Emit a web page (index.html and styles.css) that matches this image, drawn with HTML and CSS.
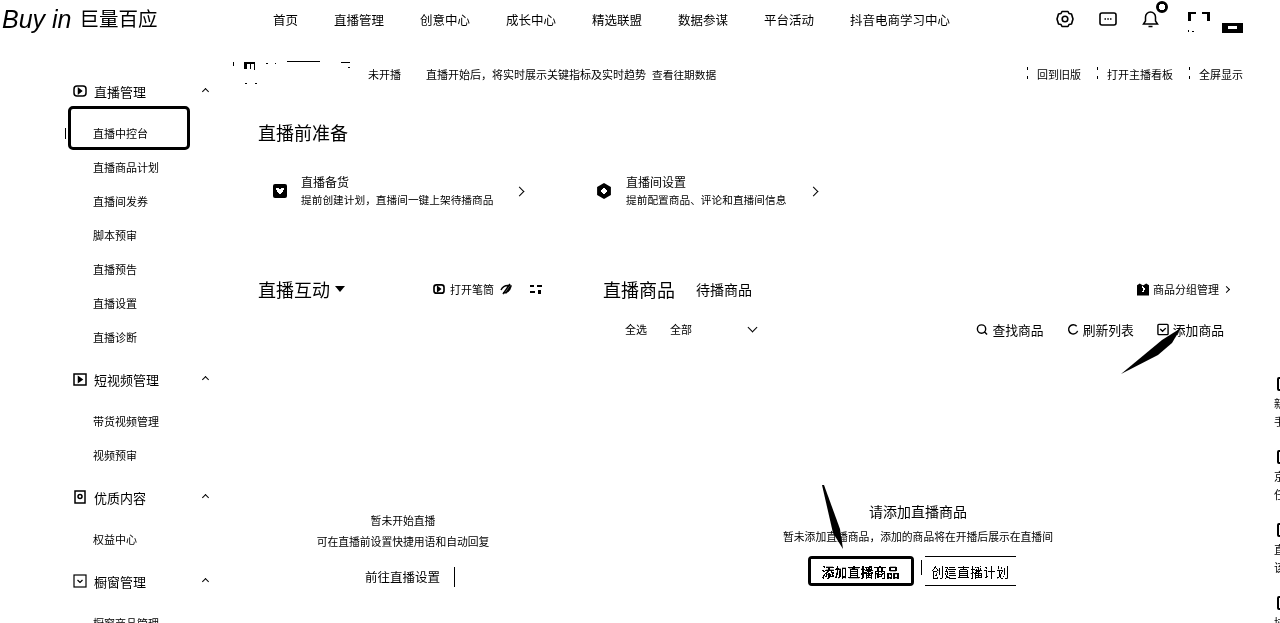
FILE: index.html
```html
<!DOCTYPE html>
<html lang="zh-CN">
<head>
    <meta charset="UTF-8">
    <title>巨量百应</title>
    <link rel="stylesheet" href="styles.css">
</head>
<body>
    <header class="topbar">
        <div class="logo"><span class="logo-en">Buy in</span><span class="logo-cn">巨量百应</span></div>
        <nav class="nav">
            <a>首页</a><a>直播管理</a><a>创意中心</a><a>成长中心</a><a>精选联盟</a><a>数据参谋</a><a>平台活动</a><a>抖音电商学习中心</a>
        </nav>
        <div class="top-icons">
            <svg width="18" height="18" viewBox="0 0 18 18" fill="none" stroke="#000" stroke-width="1.600" stroke-linejoin="round"><path d="M6 1.500h6l1 2 2.500.5 1.500 5-1.500 5-2.500.5-1 2H6l-1-2-2.500-.5L1 9l1.500-5L5 3.500z"/><circle cx="9" cy="9" r="2.800"/></svg>
            <svg width="18" height="15" viewBox="0 0 18 15" fill="none" stroke="#000" stroke-width="1.600"><path d="M3 1h12a2 2 0 0 1 2 2v8a2 2 0 0 1-2 2H3a2 2 0 0 1-2-2V3a2 2 0 0 1 2-2z"/><path d="M5.500 7h1.500M8.300 7h1.500M11 7h1.500"/></svg>
            <span class="bell">
                <svg width="17" height="18" viewBox="0 0 17 18" fill="none" stroke="#000" stroke-width="1.500"><path d="M3.500 11V7a5 5 0 0 1 10 0v4l2 3H1.500zM6.500 16.500h4"/></svg>
                <i class="badge"></i>
            </span>
            <svg class="fullscreen" width="22" height="20" viewBox="0 0 22 20"><path d="M0 0h8v2H3v7H0zM14 0h8v9h-3V2h-5z"/><rect x="0" y="18" width="1" height="2"/><rect x="4" y="19" width="2" height="1"/></svg>
            <span class="avatar"><i></i></span>
        </div>
    </header>

    <div class="layout">
        <aside class="sidebar">
            <section class="menu-group">
                <h4><svg width="14" height="12" viewBox="0 0 14 12" fill="none" stroke="#000" stroke-width="1.500"><rect x="1" y="1" width="12" height="10" rx="3"/><path d="M5.500 3.500v5l3-2.500z" fill="#000"/></svg>直播管理<span class="caret"></span></h4>
                <a class="active">直播中控台</a>
                <a>直播商品计划</a>
                <a>直播间发券</a>
                <a>脚本预审</a>
                <a>直播预告</a>
                <a>直播设置</a>
                <a>直播诊断</a>
            </section>
            <section class="menu-group">
                <h4><svg width="14" height="13" viewBox="0 0 14 13" fill="none" stroke="#000" stroke-width="1.500"><rect x="1" y="1" width="12" height="11"/><path d="M5.500 4v5l3.500-2.500z" fill="#000"/></svg>短视频管理<span class="caret"></span></h4>
                <a>带货视频管理</a>
                <a>视频预审</a>
            </section>
            <section class="menu-group">
                <h4><svg width="14" height="14" viewBox="0 0 14 14" fill="none" stroke="#000" stroke-width="1.500"><rect x="2" y="1" width="10" height="12"/><circle cx="7" cy="6.500" r="2"/></svg>优质内容<span class="caret"></span></h4>
                <a>权益中心</a>
            </section>
            <section class="menu-group">
                <h4><svg width="14" height="14" viewBox="0 0 14 14" fill="none" stroke="#000" stroke-width="1.200"><rect x="1" y="1" width="12" height="12"/><path d="M4.500 6l2.500 2.500L9.500 6"/></svg>橱窗管理<span class="caret"></span></h4>
                <a>橱窗商品管理</a>
            </section>
        </aside>

        <main class="main">
            <div class="status-bar">
                <div class="room-name">
                    <svg width="122" height="26" viewBox="0 0 122 26"><rect x="3" y="1" width="1" height="4"/><path d="M14 1h11v8h-1V3h-3v5h-1V3h-3v5h-3z"/><rect x="36" y="2" width="2" height="1"/><rect x="45" y="2" width="1" height="1"/><rect x="57" y="0" width="33" height="1"/><path d="M111 1h9v1h-9zM118 6h2v1h-2z"/><rect x="15" y="22" width="2" height="1"/><rect x="25" y="22" width="2" height="1"/></svg>
                </div>
                <span class="status-live">未开播</span>
                <span class="status-tip">直播开始后，将实时展示关键指标及实时趋势</span>
                <a class="status-history">查看往期数据</a>
                <div class="status-links"><a>回到旧版</a><a>打开主播看板</a><a>全屏显示</a></div>
            </div>

            <h2 class="section-head">直播前准备</h2>
            <div class="prep-row">
                <div class="prep-card">
                    <svg width="16" height="16" viewBox="0 0 16 16"><rect x="1" y="1" width="14" height="14" rx="2"/><path d="M4 5.500l2 -1 2 1.500 2-1.500 2 1-1 3-3 3-3-3z" fill="#fff"/></svg>
                    <div class="prep-text"><b>直播备货</b><small>提前创建计划，直播间一键上架待播商品</small></div>
                    <span class="chev"></span>
                </div>
                <div class="prep-card">
                    <svg width="16" height="16" viewBox="0 0 16 16"><path d="M8 0l6.900 4v8L8 16l-6.900-4V4z"/><circle cx="8" cy="8" r="2.800" fill="#fff"/></svg>
                    <div class="prep-text"><b>直播间设置</b><small>提前配置商品、评论和直播间信息</small></div>
                    <span class="chev"></span>
                </div>
            </div>

            <div class="panels">
                <section class="panel-left">
                    <div class="panel-head">
                        <h2>直播互动<i class="tri"></i></h2>
                        <div class="panel-tools">
                            <svg width="12" height="10" viewBox="0 0 14 12" fill="none" stroke="#000" stroke-width="2"><rect x="1" y="1" width="12" height="10" rx="3"/><path d="M5.500 3.500v5l3-2.500z" fill="#000"/></svg>
                            <span>打开笔筒</span>
                            <svg class="tool-eye" width="12" height="12" viewBox="0 0 12 12" fill="none" stroke="#000" stroke-width="1.500"><path d="M1 7c2-4 6-5 10-4-1 4-4 7-8 7M3 11l7-10M6 10l4-6"/></svg>
                            <svg class="tool-grid" width="12" height="11" viewBox="0 0 12 11"><rect x="0" y="1" width="4" height="2"/><rect x="7" y="1" width="5" height="2"/><rect x="0" y="7" width="5" height="2"/><rect x="8" y="6" width="3" height="4"/></svg>
                        </div>
                    </div>
                    <div class="empty-left">
                        <p>暂未开始直播</p>
                        <p>可在直播前设置快捷用语和自动回复</p>
                        <a class="link-btn">前往直播设置</a>
                    </div>
                </section>

                <section class="panel-right">
                    <div class="panel-head">
                        <h2>直播商品</h2><span class="tab">待播商品</span>
                        <a class="group-link"><svg width="12" height="13" viewBox="0 0 13 13"><path d="M0 2l3-2 3 2h1l3-2 3 2v11H0z"/><path d="M6 3l2 3-2 3" fill="none" stroke="#fff" stroke-width="1.500"/></svg>商品分组管理<i class="chev-small"></i></a>
                    </div>
                    <div class="filter-row">
                        <span class="check-all">全选</span>
                        <span class="select">全部<i class="chev-down"></i></span>
                        <div class="actions">
                            <a><svg width="12" height="13" viewBox="0 0 13 13" fill="none" stroke="#000" stroke-width="1.500"><circle cx="6" cy="6" r="4.500"/><path d="M9 9l3 3"/></svg>查找商品</a>
                            <a><svg width="12" height="13" viewBox="0 0 13 13" fill="none" stroke="#000" stroke-width="1.500"><path d="M10.500 3A5 5 0 1 0 11.500 8"/></svg>刷新列表</a>
                            <a><svg width="12" height="13" viewBox="0 0 13 13" fill="none" stroke="#000" stroke-width="1.500"><rect x="1" y="1" width="11" height="11" rx="1"/><path d="M3.500 6l2.500 2.500L9.500 5"/></svg>添加商品</a>
                        </div>
                    </div>
                    <div class="empty-right">
                        <h3>请添加直播商品</h3>
                        <p>暂未添加直播商品，添加的商品将在开播后展示在直播间</p>
                        <div class="btn-row">
                            <button class="btn-primary">添加直播商品</button>
                            <button class="btn-plain">创建直播计划</button>
                        </div>
                    </div>
                </section>
            </div>
        </main>
    </div>

    <aside class="side-float">
        <i></i><span>新<br>手</span>
        <i></i><span>京<br>任</span>
        <i></i><span>直<br>该</span>
        <i></i><span>协</span>
    </aside>

    <svg class="arrow arrow-add" width="65" height="50" viewBox="0 0 65 50"><path d="M1 49L42 15 61 3 52 18 38 30z"/></svg>
    <svg class="arrow arrow-btn" width="24" height="66" viewBox="0 0 24 66"><path d="M0 0L2 0 18 44 21 64 11 48z"/></svg>
</body>
</html>
```

FILE: styles.css
```css
* {
    box-sizing: border-box;
}

html, body {
    height: 623px;
    overflow: hidden;
}

body {
    margin: 0;
    background: #fff;
    color: #000;
    font-family: "Noto Sans CJK SC", "Liberation Sans", sans-serif;
    filter: grayscale(1) contrast(20);
    position: relative;
}

.topbar {
    display: flex;
    align-items: center;
    height: 38px;
}

.logo {
    width: 273px;
    padding-left: 2px;
    display: flex;
    align-items: center;
    gap: 8px;
}

.logo-en {
    font-family: "Liberation Sans", sans-serif;
    font-size: 25px;
    font-style: italic;
}

.logo-cn {
    font-size: 19.500px;
    line-height: 1;
    margin-top: -2px;
}

.nav {
    display: flex;
    gap: 36px;
    font-size: 12.500px;
}

.top-icons {
    margin-left: auto;
    width: 224px;
    display: flex;
    align-items: center;
    gap: 25px;
}

.bell {
    position: relative;
    display: flex;
}

.badge {
    position: absolute;
    top: -9px;
    right: -9px;
    width: 12px;
    height: 12px;
    border: 3px solid #000;
    border-radius: 50%;
    background: #fff;
}

.fullscreen {
    margin: 0 0 -6px 4px;
}

.avatar {
    position: relative;
    width: 21px;
    height: 10px;
    margin: 18px 0 0 -13px;
    background: #000;
}

.avatar i {
    position: absolute;
    left: 6px;
    top: 3px;
    width: 9px;
    height: 3px;
    background: #fff;
}

.layout {
    display: flex;
}

.sidebar {
    width: 230px;
    padding-top: 42px;
    flex-shrink: 0;
}

.menu-group {
    margin-bottom: 14px;
}

.menu-group h4 {
    position: relative;
    display: flex;
    align-items: center;
    gap: 7px;
    height: 24px;
    margin: 0 0 12px;
    padding: 0 0 2px 73px;
    font-size: 13px;
    font-weight: 400;
}

.caret {
    position: absolute;
    left: 203px;
    top: 9px;
    width: 5px;
    height: 5px;
    border-left: 1.500px solid #000;
    border-top: 1.500px solid #000;
    transform: rotate(45deg);
}

.menu-group a {
    display: flex;
    align-items: center;
    height: 34px;
    padding-left: 93px;
    font-size: 11px;
}

.menu-group a.active {
    position: relative;
    height: 44px;
    margin: -10px 40px 0 68px;
    padding: 10px 0 0 22px;
    border: 3px solid #000;
    border-radius: 5px;
}

.menu-group a.active::before {
    content: "";
    position: absolute;
    left: -6px;
    top: 19px;
    width: 1px;
    height: 11px;
    background: #000;
}

.main {
    flex: 1;
    min-width: 0;
    padding-right: 50px;
}

.status-bar {
    display: flex;
    align-items: center;
    height: 24px;
    margin-top: 24px;
    font-size: 11px;
}

.room-name {
    width: 138px;
    height: 20px;
    flex-shrink: 0;
}

.room-name svg {
    display: block;
    margin-top: -3px;
}

.status-tip {
    margin: 0 6px 0 25px;
}

.status-history {
    font-size: 10.700px;
}

.status-links {
    margin: 0 -13px 0 auto;
    display: flex;
    gap: 26px;
}

.status-links a {
    position: relative;
}

.status-links a::before {
    content: "";
    position: absolute;
    left: -10px;
    top: 1px;
    width: 1px;
    height: 3px;
    background: #000;
    box-shadow: 0 9px 0 #000;
}

.section-head {
    margin: 32px 0 0 28px;
    font-size: 18px;
    font-weight: 400;
    line-height: 28px;
}

.prep-row {
    display: flex;
    margin: 27px 0 0 42px;
}

.prep-card {
    display: flex;
    align-items: center;
    width: 324px;
}

.prep-text {
    display: flex;
    flex-direction: column;
    width: 215px;
    margin-left: 13px;
}

.prep-card + .prep-card .prep-text {
    width: 184px;
    margin-left: 14px;
}

.prep-text b {
    font-size: 12px;
    font-weight: 400;
    line-height: 18px;
}

.prep-text small {
    font-size: 10.700px;
    line-height: 18px;
    white-space: nowrap;
}

.chev {
    width: 7px;
    height: 7px;
    border-top: 1.500px solid #000;
    border-right: 1.500px solid #000;
    transform: rotate(45deg);
}

.panels {
    display: flex;
    margin-top: 67px;
}

.panel-left {
    width: 373px;
    padding-left: 28px;
    flex-shrink: 0;
}

.panel-right {
    flex: 1;
    min-width: 0;
}

.panel-head {
    display: flex;
    align-items: center;
    height: 26px;
}

.panel-head h2 {
    margin: 0;
    font-size: 18px;
    font-weight: 400;
}

.panel-left .panel-head h2 {
    display: flex;
    align-items: center;
    gap: 5px;
}

.tri {
    width: 0;
    height: 0;
    border: 5px solid transparent;
    border-top: 6px solid #000;
    border-bottom: 0;
}

.panel-tools {
    display: flex;
    align-items: center;
    gap: 5px;
    margin-left: 88px;
    font-size: 11px;
}

.tool-eye {
    margin-left: 1px;
}

.tool-grid {
    margin-left: 13px;
}

.empty-left {
    margin-top: 211px;
    width: 290px;
    text-align: center;
    font-size: 10.800px;
}

.empty-left p {
    margin: 0 0 7px;
    line-height: 14px;
}

.link-btn {
    display: inline-block;
    margin: 12px 0 0 14px;
    padding-right: 14px;
    border-right: 1px solid #000;
    font-size: 12.500px;
    line-height: 20px;
}

.tab {
    margin-left: 21px;
    font-size: 14px;
}

.group-link {
    margin: 0 1px 0 auto;
    display: flex;
    align-items: center;
    gap: 4px;
    font-size: 11px;
}

.chev-small {
    width: 5px;
    height: 5px;
    margin-left: 1px;
    border-top: 1.200px solid #000;
    border-right: 1.200px solid #000;
    transform: rotate(45deg);
}

.filter-row {
    display: flex;
    align-items: center;
    height: 32px;
    margin-top: 11px;
    padding-left: 22px;
    font-size: 11px;
}

.select {
    display: flex;
    align-items: center;
    width: 88px;
    margin-left: 23px;
    justify-content: space-between;
}

.chev-down {
    width: 7px;
    height: 7px;
    margin: -4px 2px 0 0;
    border-right: 1.500px solid #000;
    border-bottom: 1.500px solid #000;
    transform: rotate(45deg);
}

.actions {
    margin: 0 6px 0 auto;
    display: flex;
    gap: 23px;
    font-size: 12.800px;
}

.actions a {
    display: flex;
    align-items: center;
    gap: 4px;
}

.empty-right {
    margin-top: 156px;
    padding-left: 180px;
    width: 450px;
    display: flex;
    flex-direction: column;
    align-items: center;
    text-align: center;
    white-space: nowrap;
}

.empty-right h3 {
    margin: 0;
    font-size: 14px;
    font-weight: 400;
    line-height: 20px;
}

.empty-right p {
    margin: 7px 0 0;
    font-size: 10.800px;
    line-height: 16px;
}

.btn-row {
    display: flex;
    gap: 11px;
    margin: 12px 13px 0 0;
}

.btn-row button {
    position: relative;
    width: 106px;
    height: 30px;
    padding: 0;
    background: #fff;
    color: #000;
    font: inherit;
    font-size: 13px;
}

.btn-row .btn-primary {
    border: 3px solid #000;
    border-radius: 4px;
    font-weight: 700;
}

.btn-row .btn-plain {
    width: 91px;
    border: 0;
    border-top: 1px solid #000;
    border-bottom: 1px solid #000;
}

.btn-plain::before {
    content: "";
    position: absolute;
    left: -4px;
    top: 3px;
    width: 1px;
    height: 15px;
    background: #000;
}

.side-float {
    position: absolute;
    top: 374px;
    left: 1274px;
    display: flex;
    flex-direction: column;
    width: 30px;
    font-size: 11px;
    line-height: 18px;
}

.side-float i {
    width: 12px;
    height: 14px;
    margin: 3px 0 3px 3px;
    border: 2px solid #000;
    border-radius: 2px;
}

.side-float span {
    margin-bottom: 17px;
}

.arrow {
    position: absolute;
    fill: #000;
}

.arrow-add {
    left: 1120px;
    top: 325px;
}

.arrow-btn {
    left: 822px;
    top: 485px;
}
```
